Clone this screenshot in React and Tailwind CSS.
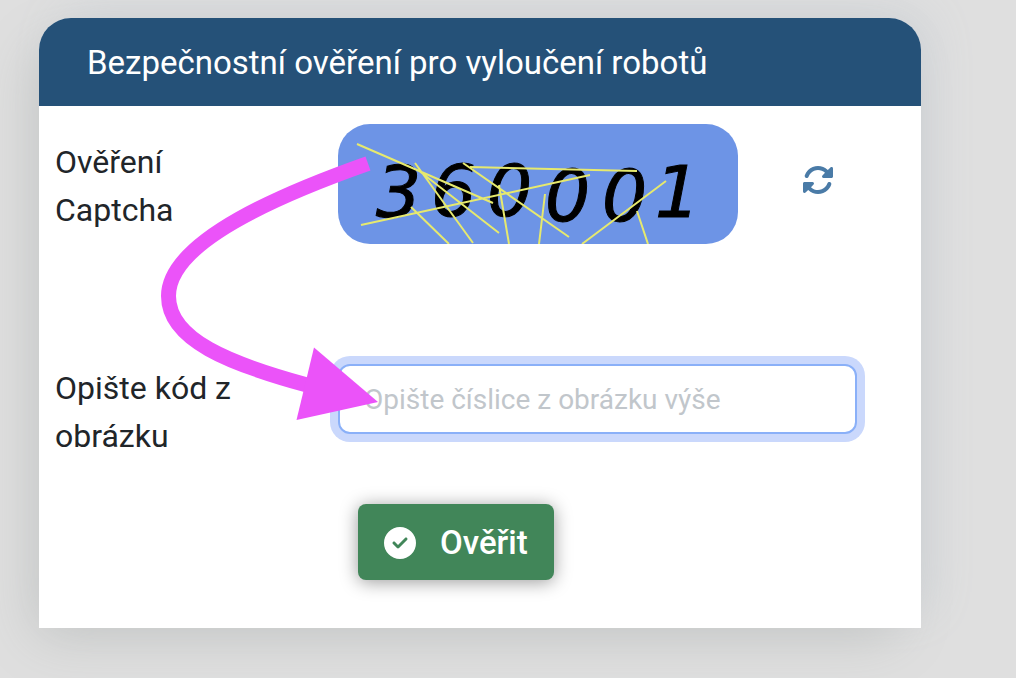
import { useState } from 'react'
import { FaCircleCheck, FaRotate } from 'react-icons/fa6'

const DIGITS = [
  { value: '3', x: 38,  y: 93 },
  { value: '6', x: 93,  y: 92 },
  { value: '0', x: 149, y: 92 },
  { value: '0', x: 207, y: 97 },
  { value: '0', x: 264, y: 97 },
  { value: '1', x: 317, y: 93 },
]

const NOISE = [
  'M19 20L155 79', 'M77 39L135 119', 'M80 46L161 109', 'M125 39L231 113',
  'M132 43L299 47', 'M23 101L252 51', 'M73 83L111 120', 'M161 61L171 120',
  'M207 70L201 120', 'M244 120L328 57', 'M299 87L310 120',
]

function CaptchaImage() {
  return (
    <svg viewBox="0 0 400 120" role="img" aria-label="Captcha" className="block w-[400px] rounded-[32px] bg-[#6d94e6]">
      <g fontFamily="DejaVu Sans, sans-serif" fontStyle="italic" fontSize="71" stroke="#000" strokeWidth="1">
        {DIGITS.map((d, i) => <text key={i} x={d.x} y={d.y}>{d.value}</text>)}
      </g>
      <path d={NOISE.join('')} stroke="#e6e96e" strokeWidth="2" fill="none"/>
    </svg>
  )
}

// Pink arrow that leads from the image to the text box
function HintArrow() {
  return (
    <svg viewBox="0 0 720 840" aria-hidden="true" className="absolute top-0 left-0 w-[360px] h-[420px] pointer-events-none">
      <path d="M658 291C502 346 259 444 259 556C259 644 382 692 536 734" stroke="#eb53f9" strokeWidth="30" fill="none"/>
      <path d="M550 659L678 768L515 804Z" fill="#eb53f9"/>
    </svg>
  )
}

export default function App() {
  const [code, setCode] = useState('')

  return (
    <div className="min-h-screen bg-[#dfdfdf] pt-[18px] pb-12 pl-[39px] pr-[95px] font-['Roboto',sans-serif] text-[32px] leading-12 text-[#212529]">
      <form
        onSubmit={e => e.preventDefault()}
        className="relative rounded-t-[32px] bg-white shadow-[-14px_18px_56px_-10px_#c3c5c4,14px_-12px_48px_-8px_#cfd3d8]"
      >
        {/* Header */}
        <h1 className="rounded-t-[32px] bg-[#255178] px-12 pt-[21px] pb-[19px] text-[33px] text-white">
          Bezpečnostní ověření pro vyloučení robotů
        </h1>

        <div className="grid grid-cols-[283px_1fr] pt-[18px] pr-16 pb-12 pl-4">
          {/* Captcha */}
          <p className="w-40 pt-3.5">Ověření Captcha</p>
          <div className="flex items-start justify-between pr-[23px]">
            <CaptchaImage/>
            <button type="button" aria-label="Obnovit" className="mt-10 text-[#4a7ba7]">
              <FaRotate size={32}/>
            </button>
          </div>

          {/* Code */}
          <label htmlFor="code" className="mt-[120px] w-48">Opište kód z obrázku</label>
          <input
            id="code"
            value={code}
            onChange={e => setCode(e.target.value)}
            placeholder="Opište číslice z obrázku výše"
            className="mt-[120px] h-[70px] w-full rounded-xl border-2 border-[#8ab0f8] bg-white px-6 text-[28px] ring-8 ring-[#cad8fc] outline-none placeholder:text-[#c1c6cb]"
          />

          <button
            type="submit"
            className="col-start-2 mt-11 ml-5 flex items-center gap-6 justify-self-start rounded-lg bg-[#418659] px-[26px] pt-[15px] pb-[13px] text-[33px] font-medium text-white shadow-[0_2px_18px_rgba(0,0,0,0.4)]"
          >
            <FaCircleCheck size={32}/>
            Ověřit
          </button>
        </div>

        <HintArrow/>
      </form>
    </div>
  )
}
